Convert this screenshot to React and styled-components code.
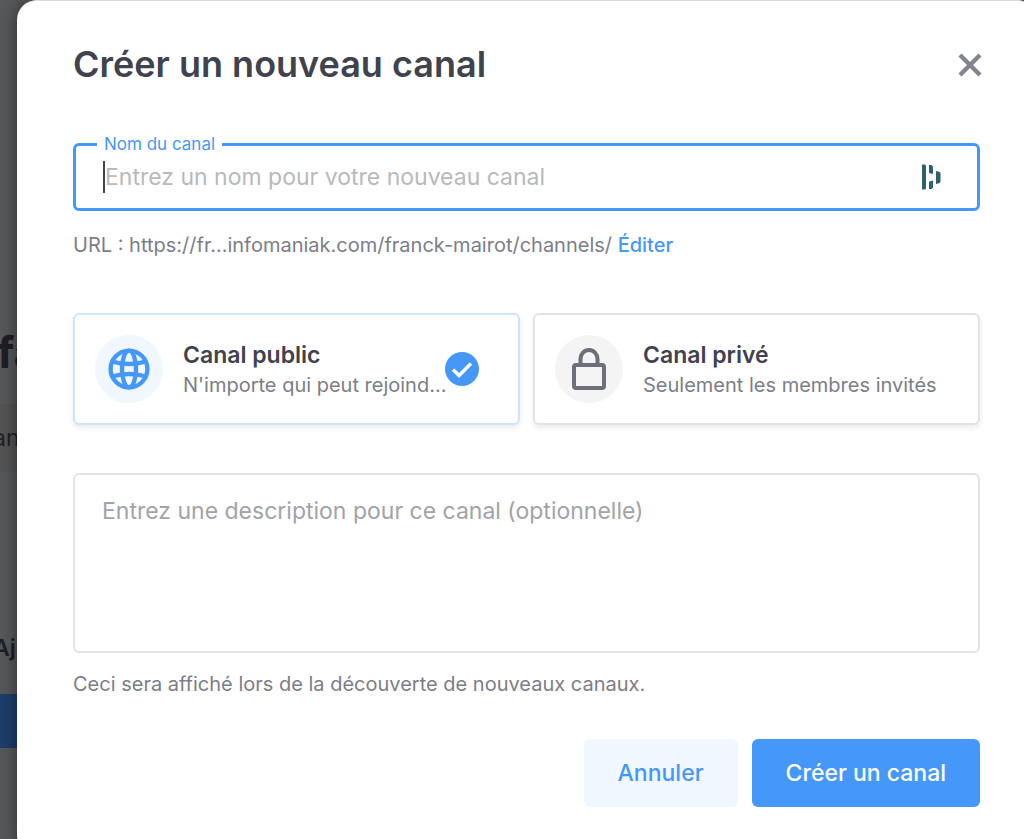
import React, { useState } from "react";
import styled, { createGlobalStyle } from "styled-components";

const GlobalStyle = createGlobalStyle`
  *, *::before, *::after { box-sizing: border-box; }
  html, body { margin: 0; height: 100%; overflow: hidden; }
  body, button, input, textarea {
    font-family: Inter, "Liberation Sans", sans-serif;
  }
`;

const Page = styled.div`
  position: relative;
  height: 100vh;
  overflow: hidden;
  background: #58595b;
`;

/* dimmed page behind the dialog */
const Behind = styled.div`
  position: absolute;
  inset: 0;
  padding-top: 324px;
  color: #1f1f24;
  white-space: nowrap;
`;

const BehindTitle = styled.div`
  height: 80px;
  margin-left: -3px;
  font-size: 44px;
  line-height: 56px;
  font-weight: 700;
`;

const BehindRow = styled.div`
  height: 68px;
  margin-bottom: 160px;
  margin-left: -7px;
  background: #545454;
  font-size: 23px;
  line-height: 68px;
`;

const BehindLabel = styled.div`
  height: 62px;
  margin-left: -7px;
  font-size: 23px;
  line-height: 32px;
  font-weight: 600;
`;

const BehindButton = styled.div`
  height: 54px;
  background: #1d3f6c;
`;

const Dialog = styled.form`
  position: relative;
  margin: 0 -13px 0 17px;
  padding: 40px 57px 48px 56px;
  border-top: 1px solid #dcdcdc;
  border-radius: 20px;
  background: #fff;
  box-shadow: 0 0 18px rgba(0, 0, 0, 0.5);
`;

const Header = styled.header`
  display: flex;
  align-items: center;
  justify-content: space-between;
  height: 48px;
`;

const Title = styled.h1`
  margin: 0;
  padding-bottom: 2px;
  color: #40424d;
  font-size: 36px;
  line-height: 44px;
  font-weight: 600;
`;

const CloseButton = styled.button`
  display: flex;
  padding: 8px;
  margin-right: -11px;
  border: 0;
  background: none;
  color: #82858f;
`;

const Field = styled.fieldset`
  display: flex;
  align-items: center;
  height: 77px;
  margin: 45px 0 20px;
  padding: 0 36px 8px 27px;
  border: 3px solid #4598f8;
  border-radius: 6px;
`;

const Legend = styled.legend`
  margin-left: -6px;
  padding: 0 7px;
  color: #4598f8;
  font-size: 17px;
  line-height: 20px;
`;

const Caret = styled.span`
  width: 2px;
  height: 32px;
  background: #40424d;
`;

const NameInput = styled.input`
  flex: 1;
  min-width: 0;
  padding: 0;
  border: 0;
  outline: 0;
  background: none;
  color: #40424d;
  caret-color: transparent;
  font-size: 23px;
  line-height: 32px;
  &::placeholder { color: #b7b9be; opacity: 1; }
`;

const Hint = styled.p`
  margin: 0;
  color: #7b7e88;
  font-size: 20px;
  line-height: 28px;
`;

const Link = styled.a`
  color: #4598f8;
  font-weight: 500;
  text-decoration: none;
`;

const Choices = styled.div`
  display: grid;
  grid-template-columns: repeat(2, minmax(0, 1fr));
  gap: 13px;
  margin: 54px 0 48px;
`;

const Choice = styled.label`
  display: flex;
  align-items: center;
  height: 112px;
  padding: 0 39px 0 20px;
  border: 2px solid ${(p) => (p.$active ? "#cde4fd" : "#e3e3e5")};
  border-radius: 6px;
  box-shadow: 0 3px 5px rgba(0, 0, 0, 0.08);
`;

const Radio = styled.input`
  position: absolute;
  opacity: 0;
`;

const Round = styled.span`
  display: flex;
  flex: none;
  align-items: center;
  justify-content: center;
  width: 68px;
  height: 68px;
  margin-right: 20px;
  border-radius: 50%;
  background: ${(p) => (p.$active ? "#f0f7ff" : "#f4f4f4")};
  color: ${(p) => (p.$active ? "#4598f8" : "#6d6f7a")};
`;

const ChoiceText = styled.span`
  flex: 1;
  min-width: 0;
`;

const ChoiceTitle = styled.span`
  display: block;
  color: #40424d;
  font-size: 23px;
  line-height: 32px;
  font-weight: 600;
`;

const ChoiceDesc = styled.span`
  display: block;
  color: #7b7e88;
  font-size: 20px;
  line-height: 28px;
  white-space: nowrap;
`;

const Check = styled.svg`
  flex: none;
`;

const Description = styled.textarea`
  display: block;
  width: 100%;
  height: 180px;
  margin-bottom: 17px;
  padding: 20px 27px;
  border: 2px solid #e3e3e5;
  border-radius: 6px;
  outline: 0;
  resize: none;
  color: #40424d;
  font-size: 23px;
  line-height: 32px;
  &::placeholder { color: #a1a3a9; opacity: 1; }
`;

const Footer = styled.footer`
  display: flex;
  justify-content: flex-end;
  gap: 14px;
  margin-top: 41px;
`;

const Button = styled.button`
  height: 68px;
  padding: 0 34px;
  border: 0;
  border-radius: 6px;
  background: ${(p) => (p.$primary ? "#4598f8" : "#f0f7ff")};
  color: ${(p) => (p.$primary ? "#fff" : "#4598f8")};
  font-size: 23px;
  line-height: 32px;
  font-weight: 500;
`;

const CloseIcon = () => (
  <svg width="26" height="26" viewBox="0 0 26 26" fill="none" stroke="currentColor" strokeWidth="4.4">
    <path d="M3 3l20 20M23 3L3 23" />
  </svg>
);

const VaultIcon = () => (
  <svg width="20" height="26" viewBox="0 0 20 26" fill="#30606e">
    <path d="M1 .5h3l1 1v23l-1 1H1z" />
    <path d="M8 1h2.500L12 2.500v7.500L8 9z" />
    <path d="M8 17.500l4-1v7L10.500 25H8z" />
    <path d="M15 7l3 .8 1.500 1v9.400l-1.500 1-3 .8z" />
  </svg>
);

const GlobeIcon = () => (
  <svg width="42" height="42" viewBox="0 0 42 42" fill="none" stroke="currentColor" strokeWidth="4.4">
    <circle cx="21" cy="21" r="18.4" />
    <ellipse cx="21" cy="21" rx="7" ry="18.4" />
    <path d="M4 13.500q17 5 34 0M4 28.500q17-5 34 0" />
  </svg>
);

const LockIcon = () => (
  <svg width="34" height="42" viewBox="0 0 34 42" fill="none" stroke="currentColor" strokeWidth="4" strokeLinejoin="round">
    <rect x="2" y="17" width="30" height="23" rx="2" />
    <path d="M8.500 17v-6a8.500 9 0 0 1 17 0v6" />
  </svg>
);

const choices = [
  { id: "public", title: "Canal public", desc: "N'importe qui peut rejoind...", Icon: GlobeIcon },
  { id: "private", title: "Canal privé", desc: "Seulement les membres invités", Icon: LockIcon },
];

export default function App() {
  const [type, setType] = useState("public");

  return (
    <Page>
      <GlobalStyle />
      <Behind aria-hidden="true">
        <BehindTitle>fa</BehindTitle>
        <BehindRow>an</BehindRow>
        <BehindLabel>Aj</BehindLabel>
        <BehindButton />
      </Behind>

      <Dialog role="dialog" aria-labelledby="title" onSubmit={(e) => e.preventDefault()}>
        <Header>
          <Title id="title">Créer un nouveau canal</Title>
          <CloseButton type="button" aria-label="Fermer">
            <CloseIcon />
          </CloseButton>
        </Header>

        <Field>
          <Legend>
            <label htmlFor="name">Nom du canal</label>
          </Legend>
          <Caret />
          <NameInput id="name" autoFocus placeholder="Entrez un nom pour votre nouveau canal" />
          <VaultIcon />
        </Field>
        <Hint>
          URL : https://fr...infomaniak.com/franck-mairot/channels/ <Link href="#edit">Éditer</Link>
        </Hint>

        <Choices>
          {choices.map(({ id, title, desc, Icon }) => (
            <Choice key={id} $active={type === id}>
              <Radio type="radio" name="type" checked={type === id} onChange={() => setType(id)} />
              <Round $active={type === id}>
                <Icon />
              </Round>
              <ChoiceText>
                <ChoiceTitle>{title}</ChoiceTitle>
                <ChoiceDesc>{desc}</ChoiceDesc>
              </ChoiceText>
              {type === id && (
                <Check width="34" height="34" viewBox="0 0 34 34" fill="none">
                  <circle cx="17" cy="17" r="17" fill="#4598f8" />
                  <path d="M8 17.500l6 6L26 11.500" stroke="#fff" strokeWidth="3.4" />
                </Check>
              )}
            </Choice>
          ))}
        </Choices>

        <Description aria-label="Description" placeholder="Entrez une description pour ce canal (optionnelle)" />
        <Hint>Ceci sera affiché lors de la découverte de nouveaux canaux.</Hint>

        <Footer>
          <Button type="button">Annuler</Button>
          <Button type="submit" $primary>Créer un canal</Button>
        </Footer>
      </Dialog>
    </Page>
  );
}
